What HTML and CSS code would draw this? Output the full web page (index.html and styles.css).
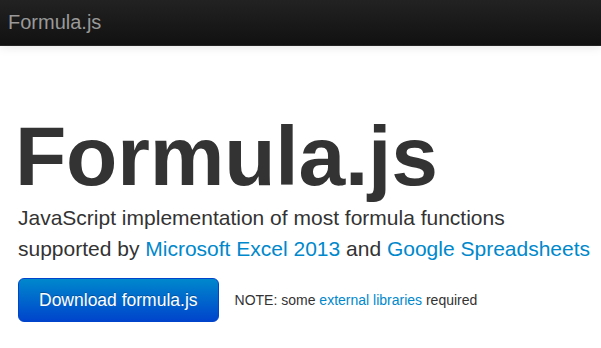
FILE: index.html
```html
<!DOCTYPE html>
<html lang="en">

<head>
    <meta charset="UTF-8">
    <meta name="viewport" content="width=device-width, initial-scale=1.0">
    <title>Formula.js</title>
    <link rel="stylesheet" href="styles.css">
</head>

<body>

    <div class="navbar">
        <div class="navbar-inner">
            <a class="brand" href="#">Formula.js</a>
        </div>
    </div>

    <div class="container">
        <div class="hero-unit">
            <h1>Formula.js</h1>
            <p class="lead">JavaScript implementation of most formula functions<br>
                supported by <a href="#">Microsoft Excel 2013</a> and <a href="#">Google Spreadsheets</a></p>
            <div class="actions">
                <a class="btn btn-large btn-primary" href="#">Download formula.js</a>
                <span class="note">NOTE: some <a href="#">external libraries</a> required</span>
            </div>
        </div>
    </div>

</body>

</html>
```
FILE: styles.css
```css
* {
    margin: 0;
    padding: 0;
}

a {
    text-decoration: none;
    color: #0088cc;
}

body {
    font-family: "Liberation Sans", Arial, sans-serif;
    font-size: 14px;
    line-height: 20px;
    color: #333;
    background: #fff;
}

.navbar-inner {
    height: 46px;
    background-image: linear-gradient(to bottom, #222222, #111111);
    border-bottom: 1px solid #252525;
    box-shadow: 0 1px 10px rgba(0, 0, 0, .1);
    box-sizing: border-box;
}

.brand {
    display: block;
    padding: 11px 8px;
    font-size: 20px;
    line-height: 22px;
    color: #999;
}

.container {
    padding: 0 4px 0 18px;
}

.hero-unit {
    padding-top: 68px;
}

.hero-unit h1 {
    font-size: 84px;
    line-height: 84px;
    letter-spacing: -0.2px;
    text-indent: -3px;
    font-weight: bold;
    margin-bottom: 4px;
}

.lead {
    font-size: 21px;
    line-height: 31px;
    white-space: nowrap;
    margin-bottom: 14px;
}

.actions {
    display: flex;
    align-items: center;
}

.btn {
    display: inline-block;
    padding: 11px 20px;
    font-size: 17.5px;
    line-height: 20px;
    color: #fff;
    text-shadow: 0 -1px 0 rgba(0, 0, 0, .25);
    background-image: linear-gradient(to bottom, #0088cc, #0044cc);
    border: 1px solid #0044cc;
    border-radius: 6px;
}

.note {
    margin-left: 16px;
}
```
